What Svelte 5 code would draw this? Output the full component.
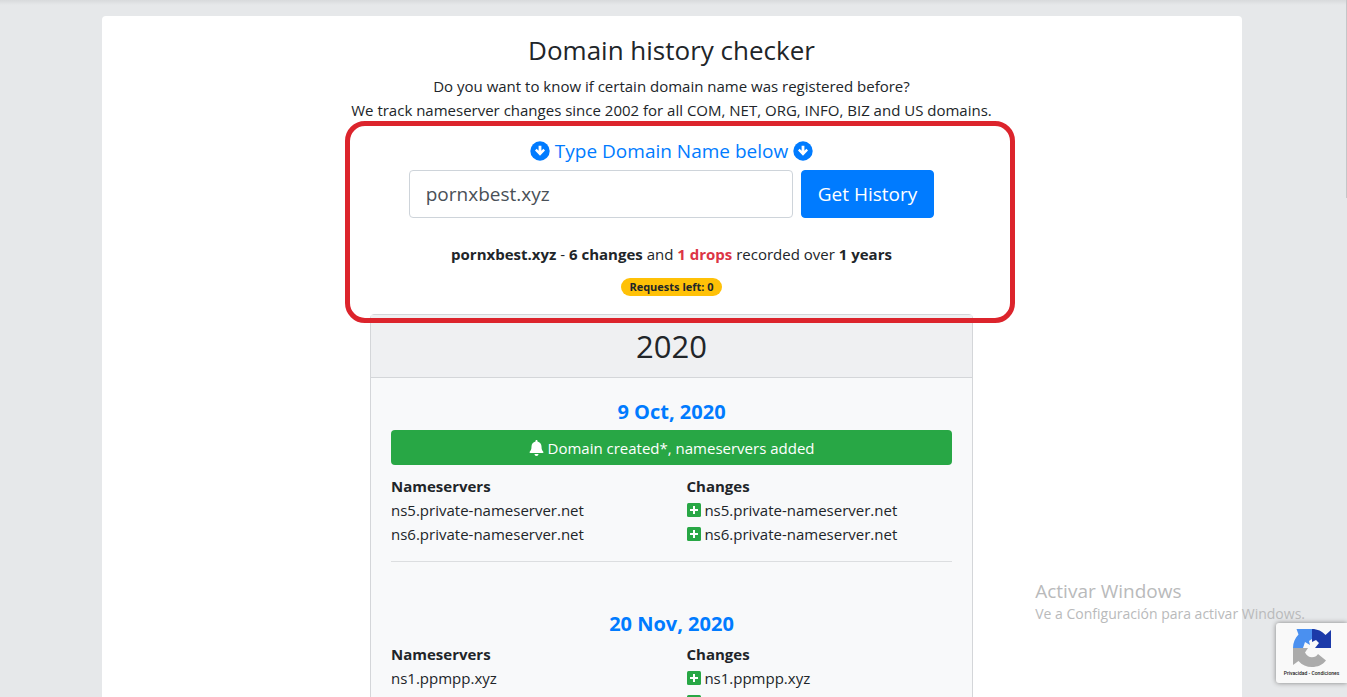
<script>
  let domain = 'pornxbest.xyz';

  const history = [
    {
      date: '9 Oct, 2020',
      event: 'Domain created*, nameservers added',
      servers: ['ns5.private-nameserver.net', 'ns6.private-nameserver.net']
    },
    {
      date: '20 Nov, 2020',
      event: '',
      servers: ['ns1.ppmpp.xyz', 'ns2.ppmpp.xyz']
    }
  ];
</script>

{#snippet arrowDown()}
  <svg class="arrow" viewBox="0 0 20 20" aria-hidden="true">
    <circle cx="10" cy="10" r="9.7" fill="#007bff" />
    <path d="M8.600 4.700h2.800v5l2-1.900 1.600 1.600L10 14.800 5 9.400l1.600-1.600 2 1.900z" fill="#fff" />
  </svg>
{/snippet}

<div class="page">
  <main class="container">
    <h1>Domain history checker</h1>
    <p>
      Do you want to know if certain domain name was registered before?<br />
      We track nameserver changes since 2002 for all COM, NET, ORG, INFO, BIZ and US domains.
    </p>

    <section class="search">
      <form on:submit|preventDefault>
        <label for="domain">
          {@render arrowDown()}
          <span>Type Domain Name below</span>
          {@render arrowDown()}
        </label>
        <div class="inputRow">
          <input id="domain" type="text" bind:value={domain} spellcheck="false" />
          <button type="submit">Get History</button>
        </div>
      </form>
      <p class="summary">
        <b>pornxbest.xyz</b> - <b>6 changes</b> and <b class="danger">1 drops</b> recorded over <b>1 years</b>
      </p>
      <span class="badge">Requests left: 0</span>
      <div class="highlight"></div>
    </section>

    <section class="card">
      <h2>2020</h2>
      <div class="cardBody">
        {#each history as item}
          <article>
            <h3>{item.date}</h3>
            {#if item.event}
              <div class="event">
                <svg viewBox="0 0 14 16" aria-hidden="true">
                  <path d="M7 0c.6 0 1 .4 1 1v.6c2.300.5 4 2.400 4 4.900 0 3.200.8 4 1.600 4.900.3.300.4.500.4.800 0 .500-.4.800-1 .800H1c-.6 0-1-.3-1-.8 0-.3.100-.5.400-.8C1.200 10.500 2 9.700 2 6.500c0-2.500 1.700-4.400 4-4.900V1c0-.6.400-1 1-1zM5 14h4c0 1.100-.9 2-2 2s-2-.9-2-2z" fill="#fff" />
                </svg>
                <span>{item.event}</span>
              </div>
            {/if}
            <table>
              <thead>
                <tr>
                  <th>Nameservers</th>
                  <th>Changes</th>
                </tr>
              </thead>
              <tbody>
                {#each item.servers as server}
                  <tr>
                    <td>{server}</td>
                    <td>
                      <svg class="plus" viewBox="0 0 14 14" aria-hidden="true">
                        <rect width="14" height="14" rx="1.5" fill="#28a745" />
                        <path d="M6 3h2v3h3v2H8v3H6V8H3V6h3z" fill="#fff" />
                      </svg>
                      {server}
                    </td>
                  </tr>
                {/each}
              </tbody>
            </table>
          </article>
        {/each}
      </div>
    </section>
  </main>

  <div class="scrollThumb"></div>

  <div class="watermark">
    <div class="watermarkTitle">Activar Windows</div>
    <div>Ve a Configuración para activar Windows.</div>
  </div>

  <aside class="captcha">
    <svg viewBox="0 0 38 38" aria-hidden="true">
      <path d="M19 0v10l-3 2 1 4-5-3-2 6H0C0 13.500 2.200 8.800 5.500 5.500L3.500 0z" fill="#4a90f0" />
      <path d="M19 0c5.500 0 10.200 2.300 13.500 6L38 1v18H22l4-5-3-3-4 2z" fill="#1c3aa9" />
      <path d="M0 19h15l-3 4.500c1.500 3 4 4.800 7 4.800 2.700 0 4.600-1 6-3.300l8 6.500c-3.500 4.500-8.500 6.500-14 6.500S9 36 5.500 32L0 36z" fill="#ababab" />
    </svg>
    <div><a href="#privacy">Privacidad</a> - <a href="#terms">Condiciones</a></div>
  </aside>
</div>

<style>
  :global(body) {
    margin: 0;
  }

  .page {
    position: relative;
    box-sizing: border-box;
    height: 100vh;
    overflow: hidden;
    padding: 16px 4px 0 0;
    background: linear-gradient(#d8dadc, #e6e8ea 5px);
    color: #212529;
    font-family: "Segoe UI", "Open Sans", "Noto Sans", sans-serif;
    font-size: 15px;
    line-height: 24px;
  }

  .container {
    box-sizing: border-box;
    max-width: 1140px;
    min-height: 100%;
    margin: 0 auto;
    padding: 17px 15px;
    border-radius: 4px;
    background: #fff;
    text-align: center;
  }

  h1,
  h2,
  h3,
  p {
    margin: 0;
    font-weight: 400;
  }

  h1 {
    margin-bottom: 7px;
    font-size: 26px;
    line-height: 34px;
  }

  .search {
    position: relative;
    max-width: 670px;
    margin: 0 auto;
    padding: 14px 0 18px;
  }

  .highlight {
    position: absolute;
    inset: -1px -8px -9px 8px;
    border: 5px solid #dc242c;
    border-radius: 20px;
    pointer-events: none;
  }

  label {
    display: flex;
    align-items: center;
    justify-content: center;
    gap: 5px;
    height: 30px;
    margin-bottom: 4px;
    color: #007bff;
    font-size: 19px;
  }

  .arrow {
    width: 20px;
    height: 20px;
  }

  .inputRow {
    display: flex;
    justify-content: center;
    gap: 8px;
  }

  input,
  button {
    box-sizing: border-box;
    height: 48px;
    padding: 8px 16px;
    border: 1px solid #ced4da;
    border-radius: 4px;
    font-family: inherit;
    font-size: 19px;
  }

  input {
    width: 384px;
    color: #495057;
  }

  button {
    border-color: #007bff;
    background: #007bff;
    color: #fff;
    cursor: pointer;
  }

  .summary {
    margin: 24px 0 12px;
  }

  .danger {
    color: #dc3545;
  }

  .badge {
    display: block;
    width: fit-content;
    margin: 0 auto;
    padding: 0 8px;
    border-radius: 9px;
    background: #ffc107;
    font-size: 11px;
    font-weight: 700;
    line-height: 18px;
  }

  .card {
    max-width: 601px;
    margin: 0 auto;
    border: 1px solid #d4d6d9;
    border-radius: 4px;
    background: #f8f9fa;
  }

  h2 {
    padding: 12px 20px;
    border-bottom: 1px solid #d4d6d9;
    background: #eff0f2;
    font-size: 31px;
    line-height: 38px;
  }

  .cardBody {
    padding: 20px;
  }

  article {
    margin-bottom: 48px;
    padding-bottom: 15px;
    border-bottom: 1px solid #dcdee0;
  }

  h3 {
    margin-bottom: 4px;
    color: #007bff;
    font-size: 20px;
    font-weight: 700;
    line-height: 28px;
  }

  .event {
    display: flex;
    align-items: center;
    justify-content: center;
    gap: 4px;
    height: 35px;
    margin-bottom: 9px;
    border-radius: 4px;
    background: #28a745;
    color: #fff;
  }

  .event svg {
    width: 15px;
    height: 16px;
  }

  table {
    width: 100%;
    border-collapse: collapse;
    table-layout: fixed;
    text-align: left;
  }

  th,
  td {
    padding: 0;
  }

  th + th,
  td + td {
    padding-left: 15px;
  }

  .plus {
    width: 14px;
    height: 14px;
    vertical-align: -1px;
  }

  .scrollThumb {
    position: absolute;
    top: 0;
    right: 0;
    width: 1px;
    height: 198px;
    background: #c4c6c8;
  }

  .watermark {
    position: absolute;
    right: 42px;
    bottom: 73px;
    color: #b9babb;
    font-size: 14px;
    line-height: 20px;
    pointer-events: none;
  }

  .watermarkTitle {
    font-size: 19px;
    line-height: 26px;
  }

  .captcha {
    position: absolute;
    right: 0;
    bottom: 14px;
    box-sizing: border-box;
    width: 71px;
    height: 60px;
    padding-top: 6px;
    border-radius: 3px 0 0 3px;
    background: #f9f9f9;
    box-shadow: 0 0 5px #808080;
    color: #222;
    font-family: Roboto, sans-serif;
    font-size: 5px;
    font-weight: 500;
    line-height: 12px;
    text-align: center;
  }

  .captcha svg {
    display: block;
    width: 38px;
    height: 38px;
    margin: 0 auto;
  }

  .captcha a {
    color: inherit;
    text-decoration: none;
  }
</style>
